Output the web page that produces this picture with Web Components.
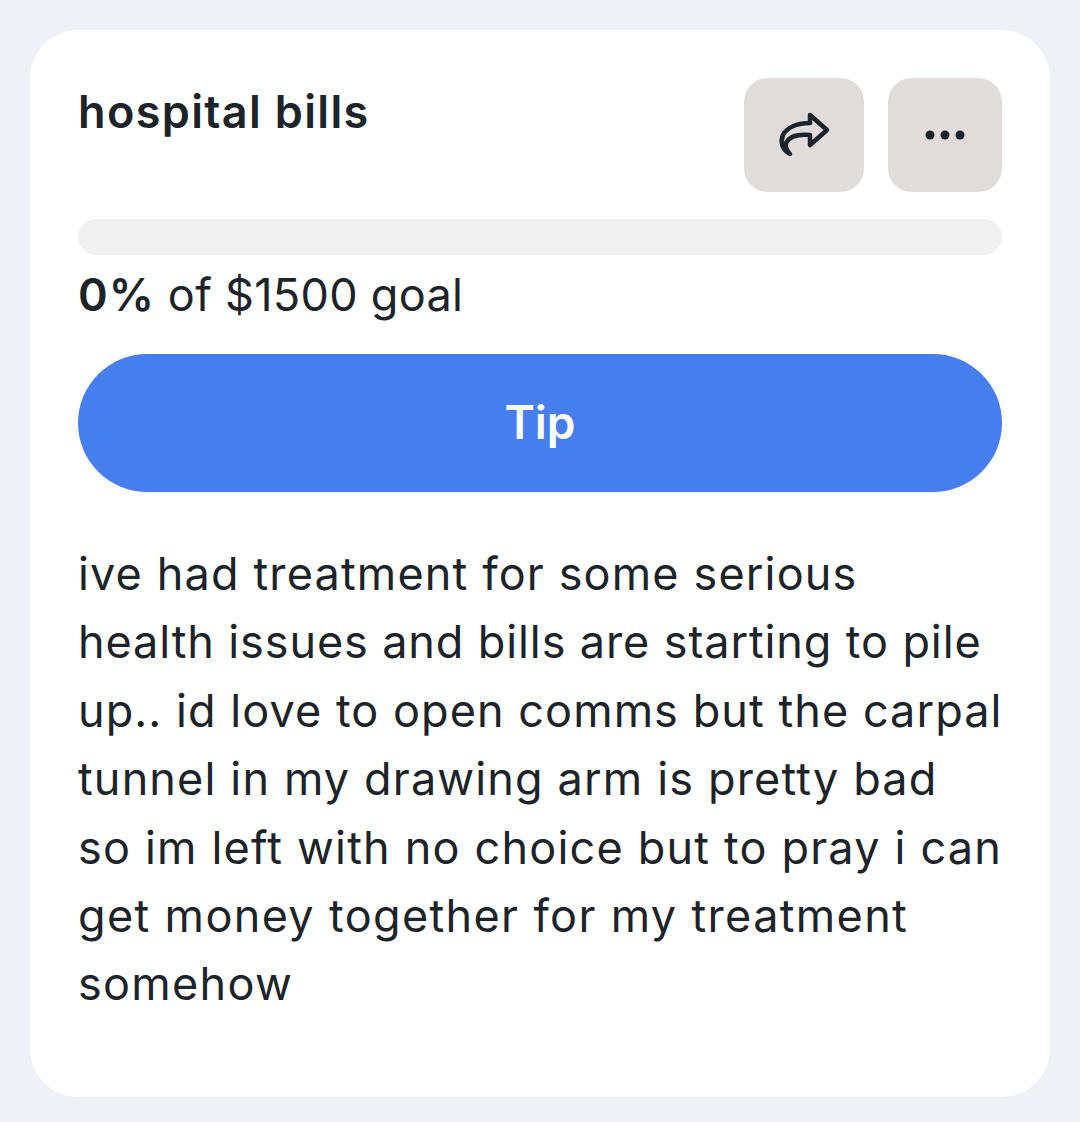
<!DOCTYPE html>
<html><head><meta charset="utf-8">
<style>
html,body{margin:0;padding:0;background:#eef1f6}
body{width:1080px;height:1122px;overflow:hidden;font-family:"Inter","Liberation Sans",sans-serif;color:#1c2329}
text-line{display:block;white-space:nowrap}
</style></head><body>
<template id="icon-btn-t"><style>
:host{display:flex;flex:none;align-items:center;justify-content:center;height:114px;background:#e0dcdc;border-radius:24px;box-sizing:border-box}
</style><slot></slot></template>
<template id="text-line-t"><style>:host{display:block;white-space:nowrap}</style><slot></slot></template>
<template id="goal-card-t"><style>
:host{display:flex;flex-direction:column;box-sizing:border-box;margin:30px 30px 0;width:1020px;height:1067px;background:#fff;border-radius:48px;padding:48px}
.top{display:flex;flex:none;justify-content:space-between;align-items:flex-start}
.title{font-size:45px;font-weight:600;line-height:68px;letter-spacing:1.35px}
.btns{display:flex;gap:24px}
.bar{flex:none;height:36px;border-radius:18px;background:#f1f1f1;margin-top:27px}
.goal{flex:none;font-size:45px;line-height:68px;margin-top:6px;letter-spacing:.3px}
.goal b{font-weight:600;letter-spacing:1px}
.tip{flex:none;display:flex;align-items:center;justify-content:center;box-sizing:border-box;height:138px;padding-bottom:3px;border-radius:69px;background:#477eee;color:#fff;font-size:46px;font-weight:600;margin-top:25px}
.desc{flex:none;font-size:45px;line-height:68.4px;margin-top:48px}
</style>
<div class="top"><div class="title">hospital bills</div><div class="btns"><slot name="actions"></slot></div></div>
<div class="bar"></div>
<div class="goal"><b>0%</b> of $1500 goal</div>
<div class="tip">Tip</div>
<div class="desc"><slot></slot></div></template>
<goal-card>
<icon-btn slot="actions" style="width:120px"><svg width="54" height="54" viewBox="0 0 54 54" fill="none" stroke="#1c2329" stroke-width="4.5" stroke-linejoin="round" stroke-linecap="round"><path d="M33 7 L50 22 L33 37 V27 C21 26 12 29 9 35 C8 39 10 43 13 46 C5 42 3 34 6 27 C10 19 21 15 33 15 Z"/></svg></icon-btn>
<icon-btn slot="actions" style="width:114px"><svg width="40" height="10" viewBox="0 0 40 10" fill="#1c2329"><circle cx="5" cy="5" r="4.5"/><circle cx="20" cy="5" r="4.5"/><circle cx="35" cy="5" r="4.5"/></svg></icon-btn>
<text-line style="letter-spacing:1.15px">ive had treatment for some serious</text-line>
<text-line style="letter-spacing:.89px">health issues and bills are starting to pile</text-line>
<text-line style="letter-spacing:1.06px">up.. id love to open comms but the carpal</text-line>
<text-line style="letter-spacing:1.15px">tunnel in my drawing arm is pretty bad</text-line>
<text-line style="letter-spacing:1.19px">so im left with no choice but to pray i can</text-line>
<text-line style="letter-spacing:1.35px">get money together for my treatment</text-line>
<text-line style="letter-spacing:1.3px">somehow</text-line>
</goal-card>
<script>
class B extends HTMLElement{constructor(){super();this.attachShadow({mode:'open'}).appendChild(document.getElementById(this.tid).content.cloneNode(true))}}
customElements.define('icon-btn',class extends B{get tid(){return 'icon-btn-t'}});
customElements.define('text-line',class extends B{get tid(){return 'text-line-t'}});
customElements.define('goal-card',class extends B{get tid(){return 'goal-card-t'}});
</script>
</body></html>
